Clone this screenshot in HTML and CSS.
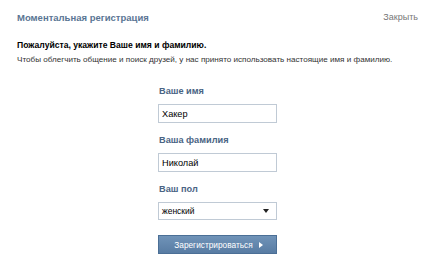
FILE: index.html
```html
<!DOCTYPE html>
<html>
<head>
<title>Моментальная регистрация</title>
<link rel="stylesheet" href="styles.css">
</head>
<body>

<div class="box">
    <div class="box-head">
        <div class="box-title">Моментальная регистрация</div>
        <a href="#" class="close-link">Закрыть</a>
    </div>

    <div class="intro">
        <div class="intro-title">Пожалуйста, укажите Ваше имя и фамилию.</div>
        <div class="intro-text">Чтобы облегчить общение и поиск друзей, у нас принято использовать настоящие имя и фамилию.</div>
    </div>

    <!-- Registration form -->
    <div class="reg-form">
        <label class="field-label">Ваше имя</label>
        <input type="text" class="field-input" value="Хакер">

        <label class="field-label">Ваша фамилия</label>
        <input type="text" class="field-input" value="Николай">

        <label class="field-label">Ваш пол</label>
        <div class="field-select">
            <span>женский</span>
            <span class="select-arrow"></span>
        </div>

        <button class="reg-btn">Зарегистрироваться <span class="btn-arrow"></span></button>
    </div>
</div>

</body>
</html>
```

FILE: styles.css
```css
body {
    margin: 0;
    background: #fff;
    font-family: 'Liberation Sans', Arial, sans-serif;
    font-size: 10px;
    color: #333;
}

.box {
    padding: 10px 16px 0 17px;
}

.box-head {
    display: flex;
    justify-content: space-between;
    align-items: center;
    height: 14px;
}

.box-title {
    font-size: 9.5px;
    font-weight: bold;
    color: #5a7594;
}

.close-link {
    font-size: 9px;
    color: #777;
    text-decoration: none;
}

.intro {
    margin-top: 14px;
}

.intro-title {
    font-weight: bold;
    color: #000;
    font-size: 8.6px;
    line-height: 14px;
}

.intro-text {
    font-size: 8.1px;
    line-height: 14px;
    margin-top: 1px;
    white-space: nowrap;
}

.reg-form {
    width: 119px;
    margin: 17px auto 0;
    display: flex;
    flex-direction: column;
}

.field-label {
    font-weight: bold;
    color: #4a6484;
    font-size: 9.2px;
    line-height: 14px;
    margin-bottom: 6px;
    padding-left: 1px;
}

.field-input {
    box-sizing: border-box;
    height: 19px;
    margin: 0 0 10px;
    padding: 0 3px;
    border: 1px solid #c0cad5;
    font-family: inherit;
    font-size: 9.2px;
    color: #000;
    outline: none;
}

.field-select {
    box-sizing: border-box;
    height: 18px;
    border: 1px solid #c0cad5;
    padding: 0 7px 0 3px;
    display: flex;
    align-items: center;
    justify-content: space-between;
    font-size: 8.5px;
    color: #000;
}

.select-arrow {
    width: 0;
    height: 0;
    border-left: 3px solid transparent;
    border-right: 3px solid transparent;
    border-top: 4px solid #222;
}

.reg-btn {
    margin-top: 15px;
    height: 19px;
    border: 1px solid #4b6f96;
    background: linear-gradient(#7093b8, #587ca3);
    color: #fff;
    font-family: inherit;
    font-size: 8.3px;
    display: flex;
    align-items: center;
    justify-content: center;
    gap: 6px;
    padding: 0 0 0 2px;
    cursor: pointer;
}

.btn-arrow {
    width: 0;
    height: 0;
    border-top: 3px solid transparent;
    border-bottom: 3px solid transparent;
    border-left: 4px solid #fff;
}
```
